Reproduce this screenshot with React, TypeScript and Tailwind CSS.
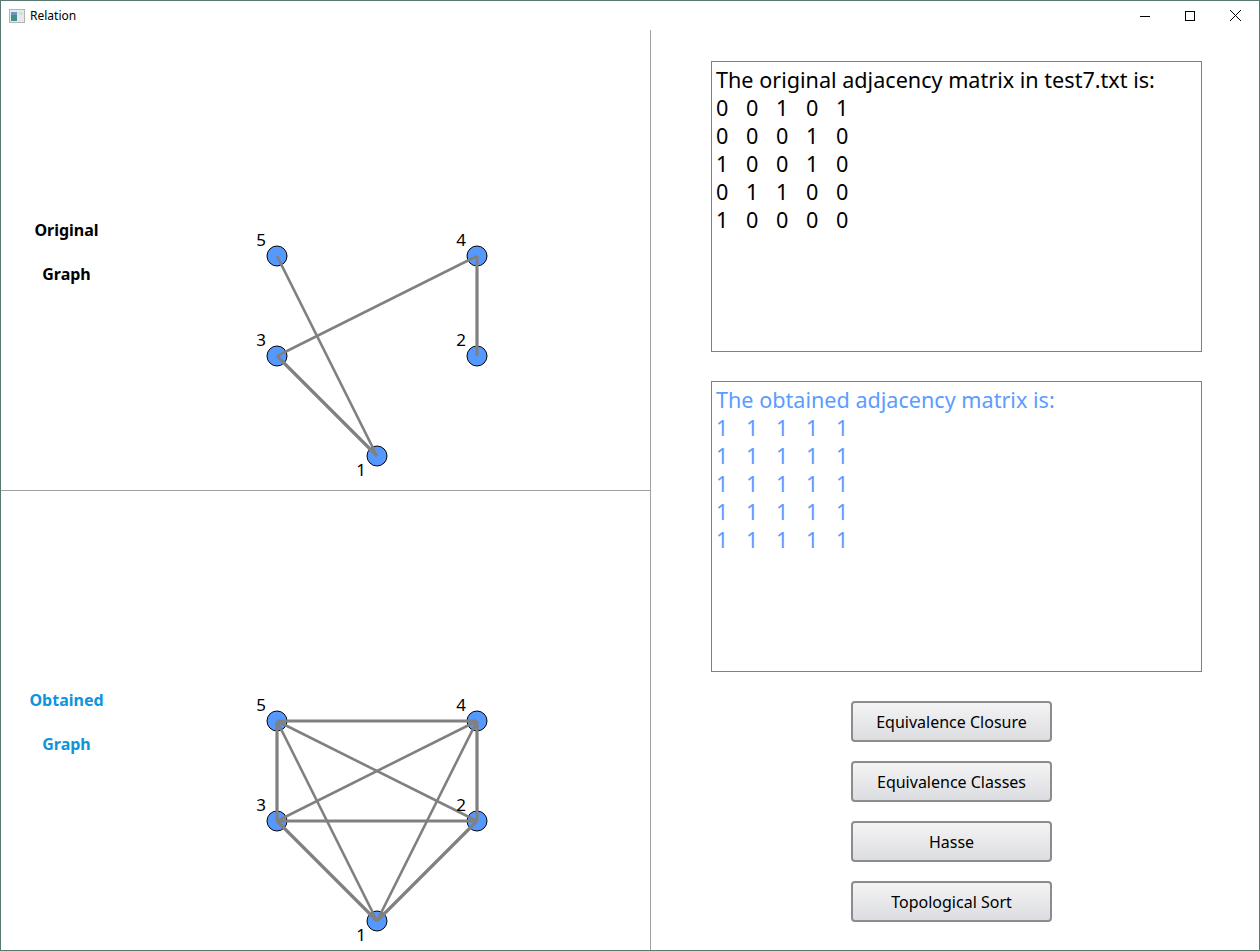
const font = { fontFamily: '"Noto Sans", sans-serif' };

// node centers, local to the svg (svg starts 240px into the pane)
const nodes: Record<number, { x: number; y: number; lx: number; ly: number }> = {
  1: { x: 137, y: 231, lx: 121, ly: 245 },
  2: { x: 237, y: 131, lx: 221, ly: 115 },
  3: { x: 37, y: 131, lx: 21, ly: 115 },
  4: { x: 237, y: 31, lx: 221, ly: 15 },
  5: { x: 37, y: 31, lx: 21, ly: 15 },
};

function Graph({ edges }: { edges: number[][] }) {
  return (
    <svg width="280" height="262" viewBox="0 0 280 262" className="shrink-0">
      {Object.entries(nodes).map(([id, n]) => (
        <circle key={id} cx={n.x} cy={n.y} r="10" fill="#5599ff" stroke="#000" strokeWidth="1" />
      ))}
      {edges.map(([a, b]) => {
        const dx = Math.abs(nodes[a].x - nodes[b].x);
        const dy = Math.abs(nodes[a].y - nodes[b].y);
        // straight and 45deg edges come out heavier in the reference
        const heavy = dx === 0 || dy === 0 || dx === dy;
        return (
          <line
            key={`${a}-${b}`}
            x1={nodes[a].x}
            y1={nodes[a].y}
            x2={nodes[b].x}
            y2={nodes[b].y}
            stroke="#808080"
            strokeWidth={heavy ? 3.2 : 2.6}
          />
        );
      })}
      {Object.entries(nodes).map(([id, n]) => (
        <text key={id} x={n.lx} y={n.ly + 6} textAnchor="middle" fontSize="17" fill="#000" style={font}>
          {id}
        </text>
      ))}
    </svg>
  );
}

function MatrixBox({ title, rows, color }: { title: string; rows: number[][]; color: string }) {
  return (
    <div
      className={`h-[291px] w-[491px] border border-[#808080] px-1 pt-[4px] text-[21.6px] leading-[28px] ${color}`}
      style={font}
    >
      <div>{title}</div>
      {rows.map((row, i) => (
        <div key={i} className="flex">
          {row.map((v, j) => (
            <span key={j} className="w-[30px]">{v}</span>
          ))}
        </div>
      ))}
    </div>
  );
}

function ActionButton({ label }: { label: string }) {
  return (
    <button className="h-[41px] w-[201px] rounded-[4px] border-2 border-[#8c8c8c] bg-gradient-to-b from-[#f4f4f5] to-[#dcdde0] text-[16px] text-black" style={font}>
      {label}
    </button>
  );
}

export default function App() {
  return (
    <div className="flex h-[951px] w-[1260px] flex-col overflow-hidden border border-[#59786f] bg-white text-black">
      {/* title bar */}
      <div className="flex h-[29px] shrink-0 items-center">
        <svg width="16" height="14" viewBox="0 0 16 14" className="ml-2">
          <rect x="0.5" y="0.5" width="15" height="13" fill="#e8e8e8" stroke="#b4b4b4" />
          <rect x="2" y="3" width="6" height="9" fill="#3f8f8a" />
          <rect x="2" y="3" width="6" height="3" fill="#6a95c4" />
          <rect x="10" y="3" width="4" height="3" fill="#cfe3d8" />
        </svg>
        <span className="ml-[5px] text-[12px]" style={font}>Relation</span>
        <div className="ml-auto flex">
          <div className="flex h-[29px] w-[45px] items-center justify-center">
            <svg width="10" height="10" viewBox="0 0 10 10"><path d="M0 5.5H10" stroke="#000" /></svg>
          </div>
          <div className="flex h-[29px] w-[45px] items-center justify-center">
            <svg width="10" height="10" viewBox="0 0 10 10"><rect x="0.5" y="0.5" width="9" height="9" fill="none" stroke="#000" /></svg>
          </div>
          <div className="flex h-[29px] w-[47px] items-center justify-center">
            <svg width="11" height="11" viewBox="0 0 11 11"><path d="M0 0L11 11M11 0L0 11" stroke="#000" /></svg>
          </div>
        </div>
      </div>

      <div className="flex min-h-0 flex-1">
        {/* left pane */}
        <div className="flex w-[649px] shrink-0 flex-col">
          <div className="flex h-[461px] shrink-0 border-b border-[#a0a0a0]">
            <div className="mt-[188px] flex h-[68px] w-[131px] shrink-0 flex-col items-center justify-between text-[16px] font-bold" style={font}>
              <span>Original</span>
              <span>Graph</span>
            </div>
            <div className="ml-[108px] mt-[195px]">
              <Graph edges={[[5, 1], [3, 4], [4, 2], [3, 1]]} />
            </div>
          </div>
          <div className="flex flex-1">
            <div className="mt-[197px] flex h-[68px] w-[131px] shrink-0 flex-col items-center justify-between text-[16px] font-bold text-[#0f94dc]" style={font}>
              <span>Obtained</span>
              <span>Graph</span>
            </div>
            <div className="ml-[108px] mt-[199px]">
              <Graph edges={[[5, 4], [5, 3], [5, 2], [5, 1], [4, 3], [4, 2], [4, 1], [3, 2], [3, 1], [2, 1]]} />
            </div>
          </div>
        </div>

        {/* right pane */}
        <div className="flex flex-1 flex-col items-start border-l border-[#a0a0a0] pl-[60px] pt-[31px]">
          <MatrixBox
            title="The original adjacency matrix in test7.txt is:"
            color="text-black"
            rows={[[0, 0, 1, 0, 1], [0, 0, 0, 1, 0], [1, 0, 0, 1, 0], [0, 1, 1, 0, 0], [1, 0, 0, 0, 0]]}
          />
          <div className="mt-[29px]">
            <MatrixBox
              title="The obtained adjacency matrix is:"
              color="text-[#5b9cff]"
              rows={[[1, 1, 1, 1, 1], [1, 1, 1, 1, 1], [1, 1, 1, 1, 1], [1, 1, 1, 1, 1], [1, 1, 1, 1, 1]]}
            />
          </div>
          <div className="ml-[140px] mt-[29px] flex flex-col gap-[19px]">
            <ActionButton label="Equivalence Closure" />
            <ActionButton label="Equivalence Classes" />
            <ActionButton label="Hasse" />
            <ActionButton label="Topological Sort" />
          </div>
        </div>
      </div>
    </div>
  );
}
